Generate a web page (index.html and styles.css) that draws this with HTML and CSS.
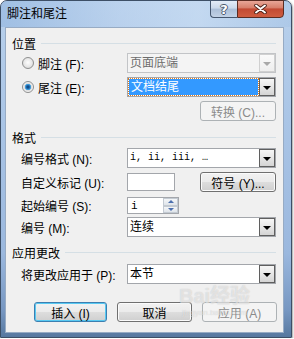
FILE: index.html
```html
<!DOCTYPE html>
<html>
<head>
<meta charset="utf-8">
<link rel="stylesheet" href="styles.css">
</head>
<body>
<div class="window">
  <div class="titlebar">
    <div class="title">脚注和尾注</div>
    <div class="caps">
      <div class="cap help">?</div>
      <div class="cap close"><svg width="13" height="10" viewBox="0 0 13 10"><path d="M2 1.5 L11 8.5 M11 1.5 L2 8.5" stroke="#4a2016" stroke-width="3.6" stroke-linecap="round"/><path d="M2 1.5 L11 8.5 M11 1.5 L2 8.5" stroke="#fff" stroke-width="1.9" stroke-linecap="round"/></svg></div>
    </div>
  </div>
  <div class="client">
    <div class="group"><span>位置</span><i></i></div>
    <div class="row m2">
      <div class="label radio"><span class="rb"></span>脚注 (F):</div>
      <div class="combo disabled"><span class="val">页面底端</span><span class="arr"></span></div>
    </div>
    <div class="row m4">
      <div class="label radio"><span class="rb on"></span>尾注 (E):</div>
      <div class="combo"><span class="val"><span class="sel">文档结尾</span></span><span class="arr"></span></div>
    </div>
    <div class="row m4 end"><div class="btn disabled w76">转换 (C)...</div></div>

    <div class="group m8"><span>格式</span><i></i></div>
    <div class="row m3">
      <div class="label">编号格式 (N):</div>
      <div class="combo"><span class="val mono">i, ii, iii, …</span><span class="arr"></span></div>
    </div>
    <div class="row m4">
      <div class="label">自定义标记 (U):</div>
      <div class="inp w48"></div>
      <div class="btn w76 push">符号 (Y)...</div>
    </div>
    <div class="row m5 h17">
      <div class="label">起始编号 (S):</div>
      <div class="inp spinbox"><span class="mono">i</span><span class="spin"><span class="up"></span><span class="dn"></span></span></div>
    </div>
    <div class="row m3">
      <div class="label">编号 (M):</div>
      <div class="combo"><span class="val">连续</span><span class="arr"></span></div>
    </div>

    <div class="group m7"><span>应用更改</span><i></i></div>
    <div class="row m4">
      <div class="label">将更改应用于 (P):</div>
      <div class="combo"><span class="val">本节</span><span class="arr"></span></div>
    </div>

    <div class="buttons">
      <div class="btn def w73">插入 (I)</div>
      <div class="btn w75">取消</div>
      <div class="btn disabled w75">应用 (A)</div>
    </div>
  </div>
  <div class="watermark"><span class="wm-big">Bai经验</span><span class="wm-small">jingyan.baidu.com</span></div>
</div>
</body>
</html>
```

FILE: styles.css
```css
* { box-sizing: border-box; }
body {
  margin: 0;
  background: #fff;
  font-family: "Liberation Sans", "Noto Sans CJK SC", sans-serif;
  font-size: 12px;
  color: #000;
}
.window {
  position: relative;
  width: 292px;
  height: 338px;
  border: 1px solid #3d4f66;
  border-radius: 7px 7px 0 0;
  background: linear-gradient(180deg, #b9d1ec 0%, #aac5e6 35%, #9bb8de 75%, #7797c2 92%, #57789f 100%);
  display: flex;
  flex-direction: column;
  padding: 0 7px 4px 4px;
  box-shadow: 1px 1px 2px rgba(0,0,0,.35);
}
.titlebar {
  height: 26px;
  display: flex;
  justify-content: space-between;
  align-items: flex-start;
  background: linear-gradient(90deg, rgba(150,184,224,.7) 0%, rgba(190,212,240,.35) 40%, rgba(205,224,245,.55) 68%, rgba(160,192,228,.4) 100%);
  margin: 0 -7px 0 -4px;
  padding: 0 7px 0 4px;
  border-radius: 6px 6px 0 0;
}
.title {
  padding: 4px 0 0 2px;
  line-height: 18px;
  font-size: 12px;
}
.caps { display: flex; margin-top: -1px; }
.cap {
  height: 18px;
  border: 1px solid #45576f;
  display: flex;
  align-items: center;
  justify-content: center;
}
.help {
  width: 27px;
  border-right: none;
  border-radius: 0 0 0 4px;
  background: linear-gradient(180deg, #e3ecf7 0%, #cbd9eb 45%, #abbfd8 50%, #c2d2e6 100%);
  color: #fff;
  font-family: "DejaVu Sans", sans-serif;
  font-weight: bold;
  font-size: 13px;
  text-shadow: -1px 0 #4b5a6e, 1px 0 #4b5a6e, 0 -1px #4b5a6e, 0 1px #4b5a6e;
}
.close {
  width: 47px;
  border-radius: 0 0 4px 0;
  border-color: #5b2c22;
  background: linear-gradient(180deg, #e8a697 0%, #d7806c 42%, #c24a33 50%, #cf5d40 100%);
}
.client {
  flex: 1;
  background: #f0f0f0;
  border: 1px solid #97abc4;
  padding: 7px 7px 0 15px;
  display: flex;
  flex-direction: column;
}
.group {
  display: flex;
  align-items: center;
  height: 16px;
  margin-left: -9px;
  font-size: 12px;
}
.group i {
  flex: 1;
  height: 1px;
  background: #d5dfe5;
  margin-left: 5px;
}
.row { display: flex; align-items: center; height: 20px; }
.row.h17 { height: 17px; }
.row.end { justify-content: flex-end; }
.m2 { margin-top: 2px; }
.m3 { margin-top: 3px; }
.m4 { margin-top: 4px; }
.m5 { margin-top: 5px; }
.m7 { margin-top: 7px; }
.m8 { margin-top: 8px; }
.label {
  width: 106px;
  flex: none;
  display: flex;
  align-items: center;
  white-space: nowrap;
}
.label.radio { padding-left: 1px; }
.rb {
  width: 12px;
  height: 12px;
  border-radius: 50%;
  border: 1px solid #8e8f8f;
  background: radial-gradient(circle at 50% 45%, #fdfdfd 0%, #e9e9e9 50%, #cfcfcf 100%);
  margin-right: 4px;
  flex: none;
}
.rb.on {
  background: radial-gradient(circle at 50% 50%, #0c3a6a 0%, #1f6bb0 25%, #54aee6 42%, #dcdcdc 50%, #f6f6f6 70%, #d8d8d8 100%);
}
.combo {
  width: 149px;
  height: 20px;
  border: 1px solid #a3a6ab;
  background: #fff;
  display: flex;
  flex: none;
}
.combo.disabled { background: #f4f4f4; color: #6d6d6d; border-color: #c2c4c7; }
.val {
  flex: 1;
  padding-left: 2px;
  line-height: 18px;
  white-space: nowrap;
  overflow: hidden;
  display: flex;
}
.sel {
  flex: 1;
  margin: 1px 1px 1px -1px;
  background: #3399ff;
  color: #fff;
  outline: 1px dotted #e07a1a;
  line-height: 16px;
  padding-left: 2px;
}
.mono {
  font-family: "Liberation Mono", "DejaVu Sans Mono", monospace;
  font-size: 10px;
  letter-spacing: 0;
}
.arr {
  width: 16px;
  height: 18px;
  flex: none;
  border: 1px solid #5f5f5f;
  background: linear-gradient(180deg, #f6f6f6 0%, #e6e6e6 50%, #d4d4d4 100%);
  display: flex;
  align-items: center;
  justify-content: center;
}
.arr::after {
  content: "";
  width: 0;
  height: 0;
  border-left: 4px solid transparent;
  border-right: 4px solid transparent;
  border-top: 4px solid #000;
  margin-top: 1px;
}
.combo.disabled .arr { border-color: #d0d0d0; background: linear-gradient(180deg, #fafafa, #eeeeee); }
.combo.disabled .arr::after { border-top-color: #a8a8a8; }
.btn {
  height: 20px;
  border: 1px solid #707070;
  border-radius: 3px;
  background: linear-gradient(180deg, #f2f2f2 0%, #ebebeb 48%, #dddddd 52%, #cfcfcf 100%);
  box-shadow: inset 0 0 0 1px #fbfbfb;
  display: flex;
  align-items: center;
  justify-content: center;
  white-space: nowrap;
  flex: none;
}
.btn.def { border-color: #3c7fb1; box-shadow: inset 0 0 0 1px #58c9f2; }
.btn.disabled {
  border-color: #adb2b5;
  background: #f4f4f4;
  color: #8b8b8b;
  box-shadow: none;
}
.w73 { width: 73px; }
.w75 { width: 75px; }
.w76 { width: 76px; }
.w48 { width: 48px; }
.push { margin-left: auto; }
.inp {
  height: 18px;
  background: #fff;
  border: 1px solid #a3a6ab;
  flex: none;
}
.spinbox {
  width: 52px;
  height: 17px;
  display: flex;
  align-items: center;
  padding-left: 3px;
}
.spinbox .mono { font-size: 11px; }
.spin {
  margin-left: auto;
  width: 15px;
  height: 15px;
  display: flex;
  flex-direction: column;
}
.spin span {
  flex: 1;
  border: 1px solid #c3cad2;
  background: linear-gradient(180deg, #f4f6f8, #dfe4ea);
  display: flex;
  align-items: center;
  justify-content: center;
}
.spin .up::after {
  content: "";
  border-left: 3px solid transparent;
  border-right: 3px solid transparent;
  border-bottom: 3px solid #4b6fae;
}
.spin .dn::after {
  content: "";
  border-left: 3px solid transparent;
  border-right: 3px solid transparent;
  border-top: 3px solid #4b6fae;
}
.buttons {
  margin-top: 18px;
  display: flex;
  justify-content: flex-end;
  gap: 10px;
  margin-right: -1px;
}
.watermark {
  position: absolute;
  left: 178px;
  top: 283px;
  display: flex;
  flex-direction: column;
  align-items: center;
  pointer-events: none;
  color: rgba(255,255,255,.5);
  text-shadow: 0 0 1px rgba(110,110,110,.35);
}
.wm-big {
  font-family: "Liberation Sans", "Noto Sans CJK SC", sans-serif;
  font-weight: bold;
  font-size: 20px;
  line-height: 24px;
}
.wm-small {
  font-family: "Liberation Sans", sans-serif;
  font-size: 8px;
  line-height: 10px;
}
```
